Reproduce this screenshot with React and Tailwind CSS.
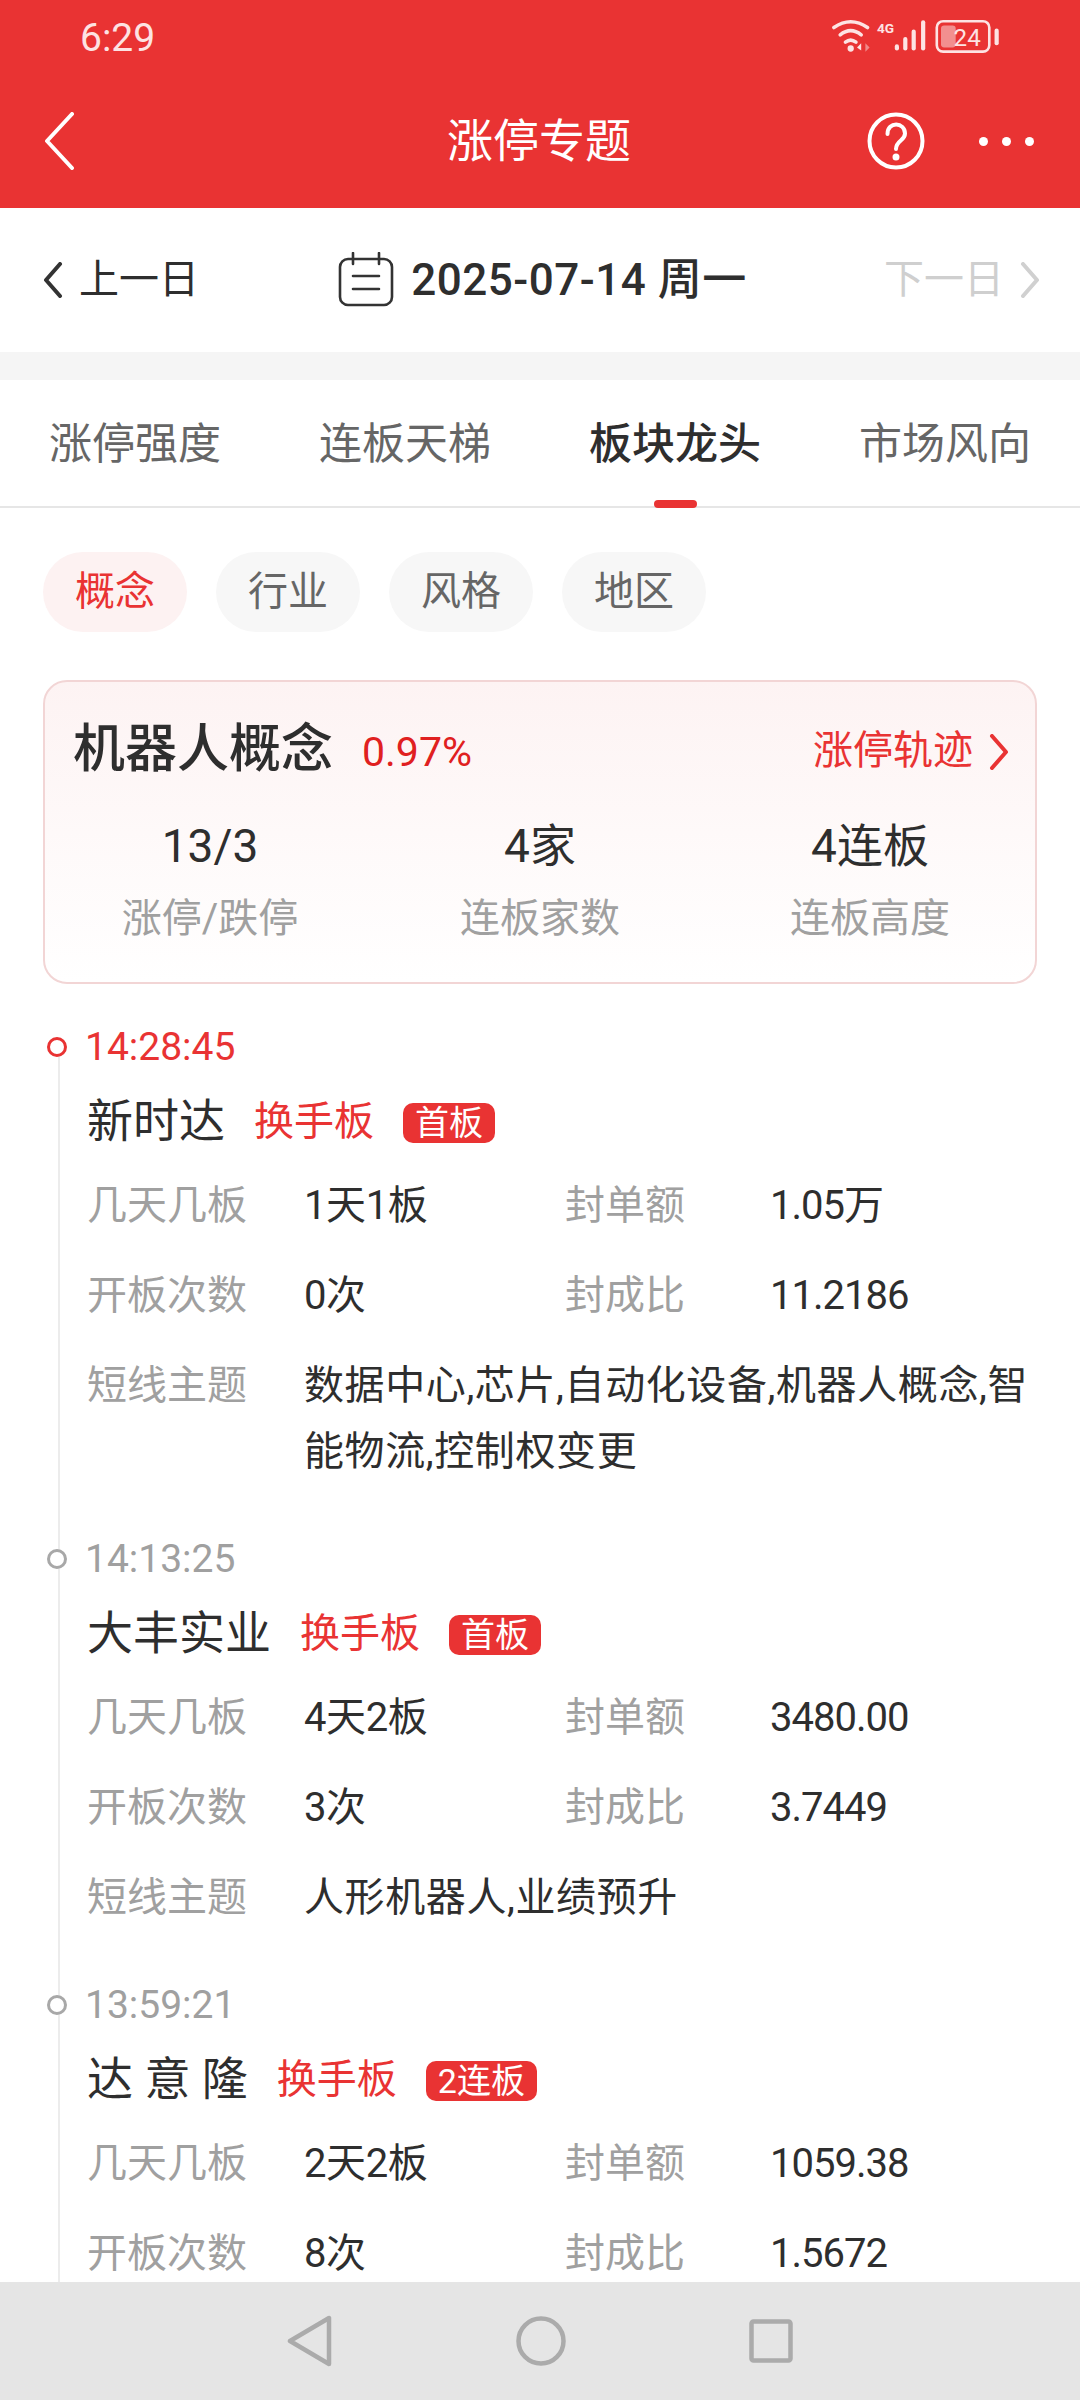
const FONT = 'font-["Roboto","Noto_Sans_CJK_SC",sans-serif]';

const stocks = [
  {
    time: '14:28:45',
    active: true,
    name: '新时达',
    tag: '首板',
    rows: [
      ['几天几板', '1天1板', '封单额', '1.05万'],
      ['开板次数', '0次', '封成比', '11.2186'],
    ],
    theme: '数据中心,芯片,自动化设备,机器人概念,智能物流,控制权变更',
  },
  {
    time: '14:13:25',
    name: '大丰实业',
    tag: '首板',
    rows: [
      ['几天几板', '4天2板', '封单额', '3480.00'],
      ['开板次数', '3次', '封成比', '3.7449'],
    ],
    theme: '人形机器人,业绩预升',
  },
  {
    time: '13:59:21',
    name: '达 意 隆',
    tag: '2连板',
    rows: [
      ['几天几板', '2天2板', '封单额', '1059.38'],
      ['开板次数', '8次', '封成比', '1.5672'],
    ],
  },
];

function StatusIcons() {
  return (
    <svg width="178" height="42" viewBox="0 0 168 40" fill="none" className="text-[#fde3e3]">
      {/* wifi */}
      <g stroke="currentColor" strokeWidth="3.4" strokeLinecap="round">
        <path d="M2 10 Q18 -1 34 10" />
        <path d="M8 17 Q18 9 28 17" />
        <path d="M13 24 Q18 20 23 24" />
      </g>
      <circle cx="18" cy="30" r="3" fill="currentColor" />
      <path d="M28 25 L28 32 L24 29 Z" fill="currentColor" />
      <path d="M32 25 L36 29 L32 33 Z" fill="#f08a8a" />
      {/* 4G */}
      <text x="43" y="15" fontSize="13" fontWeight="700" fill="currentColor" fontFamily="Roboto, sans-serif">4G</text>
      {/* signal */}
      <g fill="currentColor">
        <rect x="60" y="26" width="4" height="6" rx="2" />
        <rect x="68" y="19" width="4" height="13" rx="2" />
        <rect x="76" y="12" width="4" height="20" rx="2" />
        <rect x="85" y="3" width="4" height="29" rx="2" />
      </g>
      {/* battery */}
      <rect x="100" y="4" width="50" height="29" rx="6" stroke="currentColor" strokeWidth="2.5" />
      <rect x="104" y="8" width="14" height="21" rx="3" fill="#f28f8f" />
      <text x="116" y="28" fontSize="23" fill="currentColor" fontFamily="Roboto, sans-serif">24</text>
      <rect x="155" y="11" width="4" height="16" rx="2" fill="currentColor" />
    </svg>
  );
}

function CalendarIcon() {
  return (
    <svg width="56" height="56" viewBox="0 0 56 56" fill="none" stroke="#333" strokeWidth="2.6" strokeLinecap="round">
      <rect x="2" y="7" width="52" height="46" rx="8" />
      <path d="M15 1 V12 M41 1 V12" />
      <path d="M15 24 H41 M15 37 H41" />
    </svg>
  );
}

function Chevron({ dir, color, className }) {
  const d = dir === 'left' ? 'M17 2 L3 18 L17 34' : 'M3 2 L17 18 L3 34';
  return (
    <svg width="20" height="36" viewBox="0 0 20 36" fill="none" stroke={color} strokeWidth="4" strokeLinecap="round" strokeLinejoin="round" className={className}>
      <path d={d} />
    </svg>
  );
}

function StockItem({ item }) {
  return (
    <div className="relative pl-[87px] pr-[42px]">
      <div className="flex items-center h-[44px] -ml-[41px] pl-[2px]">
        <span
          className={`w-[20px] h-[20px] rounded-full border-[3px] bg-white shrink-0 -ml-[1px] ${item.active ? 'border-[#e93333]' : 'border-[#a8a8a8]'}`}
        />
        <span className={`ml-[18px] text-[39px] leading-none ${item.active ? 'text-[#e93333]' : 'text-[#a0a0a0]'}`}>
          {item.time}
        </span>
      </div>
      <div className="flex items-center h-[60px] mt-[22px]">
        <span className="text-[46px] leading-none text-[#2e2e2e]">{item.name}</span>
        <span className="ml-[29px] mt-[2px] text-[40px] leading-none text-[#e93333]">换手板</span>
        <span className="ml-[29px] mt-[4px] h-[40px] px-[12px] rounded-[10px] bg-[#e93333] text-white text-[34px] leading-[40px]">
          {item.tag}
        </span>
      </div>
      <div className="mt-[25px] flex flex-col gap-[30px]">
        {item.rows.map((row) => (
          <div key={row[0]} className="flex items-center h-[60px] text-[40px] leading-none">
            <span className="w-[217px] text-[#a0a0a0]">{row[0]}</span>
            <span className="w-[261px] tracking-[-0.4px] text-[#2e2e2e]">{row[1]}</span>
            <span className="w-[205px] text-[#a0a0a0]">{row[2]}</span>
            <span className="tracking-[-1px] text-[#2e2e2e]">{row[3]}</span>
          </div>
        ))}
      </div>
      {item.theme && (
        <div className="mt-[27px] flex text-[40px] leading-[66px]">
          <span className="w-[217px] shrink-0 text-[#a0a0a0]">短线主题</span>
          <span className="tracking-[0.6px] text-[#2e2e2e]">{item.theme}</span>
        </div>
      )}
    </div>
  );
}

export default function App() {
  return (
    <div className={`w-[1080px] h-[2400px] flex flex-col bg-white overflow-hidden ${FONT}`}>
      {/* red header */}
      <div className="h-[208px] shrink-0 bg-[#e93333] flex flex-col text-white">
        <div className="h-[76px] flex items-center justify-between pl-[80px] pr-[71px]">
          <span className="text-[39px] leading-none text-[#fde3e3]">6:29</span>
          <StatusIcons />
        </div>
        <div className="flex-1 grid grid-cols-[1fr_auto_1fr] items-center pl-[44px] pr-[46px] pb-[2px]">
          <svg width="30" height="58" viewBox="0 0 30 58" fill="none" stroke="white" strokeWidth="4" strokeLinecap="round" strokeLinejoin="round">
            <path d="M28 2 L3 29 L28 56" />
          </svg>
          <span className="text-[46px] leading-none">涨停专题</span>
          <div className="flex items-center justify-end gap-[54px]">
            <svg width="58" height="58" viewBox="0 0 58 58" fill="none" stroke="white" strokeWidth="4" strokeLinecap="round">
              <circle cx="29" cy="29" r="26.5" />
              <path d="M20.5 22 C20.5 9 38 10 38 21.5 C38 29 29 28 29 37" />
              <circle cx="29" cy="45" r="1.5" fill="white" />
            </svg>
            <div className="flex gap-[14px]">
              <span className="w-[9px] h-[9px] rounded-full bg-white" />
              <span className="w-[9px] h-[9px] rounded-full bg-white" />
              <span className="w-[9px] h-[9px] rounded-full bg-white" />
            </div>
          </div>
        </div>
      </div>

      {/* date row */}
      <div className="h-[144px] shrink-0 flex items-center justify-between pl-[43px] pr-[40px]">
        <div className="flex items-center text-[40px] text-[#2e2e2e]">
          <Chevron dir="left" color="#333" />
          <span className="ml-[16px]">上一日</span>
        </div>
        <div className="flex items-center gap-[17px] ml-[2px] text-[44px] tracking-[0.5px] font-medium text-[#2e2e2e]">
          <CalendarIcon />
          <span>2025-07-14 周一</span>
        </div>
        <div className="flex items-center text-[40px] text-[#cfcfcf]">
          <span>下一日</span>
          <Chevron dir="right" color="#d0d0d0" className="ml-[16px]" />
        </div>
      </div>
      <div className="h-[28px] shrink-0 bg-[#f5f5f5]" />

      {/* tabs */}
      <div className="relative h-[128px] shrink-0 border-b-2 border-[#e6e6e6] flex items-center justify-between px-[49px] pt-[2px] text-[43px] text-[#666]">
        <span>涨停强度</span>
        <span>连板天梯</span>
        <span className="font-medium text-[#2e2e2e]">板块龙头</span>
        <span>市场风向</span>
        <span className="absolute left-[654px] -bottom-[2px] w-[43px] h-[8px] rounded-full bg-[#e93333]" />
      </div>

      {/* content */}
      <div className="relative flex-1 min-h-0 overflow-hidden">
        <div className="flex gap-[29px] px-[43px] pt-[44px]">
          <span className="w-[144px] h-[80px] rounded-full bg-[#fdf2f2] text-[#e93333] text-[40px] flex items-center justify-center">概念</span>
          <span className="w-[144px] h-[80px] rounded-full bg-[#f7f7f7] text-[#666] text-[40px] flex items-center justify-center">行业</span>
          <span className="w-[144px] h-[80px] rounded-full bg-[#f7f7f7] text-[#666] text-[40px] flex items-center justify-center">风格</span>
          <span className="w-[144px] h-[80px] rounded-full bg-[#f7f7f7] text-[#666] text-[40px] flex items-center justify-center">地区</span>
        </div>

        {/* summary card */}
        <div className="mx-[43px] mt-[48px] h-[304px] rounded-[24px] border-2 border-[#f2d5d5] bg-gradient-to-b from-[#fdf3f3] to-white">
          <div className="flex items-center h-[104px] mt-[16px] pl-[28px] pr-[26px]">
            <span className="text-[52px] font-medium leading-none text-[#2e2e2e]">机器人概念</span>
            <span className="ml-[29px] mt-[4px] text-[41px] leading-none text-[#e02020]">0.97%</span>
            <span className="ml-auto mt-[2px] text-[40px] leading-none text-[#e93333]">涨停轨迹</span>
            <Chevron dir="right" color="#e93333" className="ml-[16px] mt-[4px]" />
          </div>
          <div className="grid grid-cols-3 mt-[14px]">
            {[
              ['13/3', '涨停/跌停'],
              ['4家', '连板家数'],
              ['4连板', '连板高度'],
            ].map(([value, label]) => (
              <div key={label} className="flex flex-col items-center">
                <span className="text-[46px] leading-[60px] text-[#2e2e2e]">{value}</span>
                <span className="mt-[13px] text-[40px] leading-[60px] text-[#a0a0a0]">{label}</span>
              </div>
            ))}
          </div>
        </div>

        {/* timeline */}
        <div className="relative mt-[41px] pb-[120px] flex flex-col gap-[52px]">
          <span className="absolute left-[58px] top-[30px] bottom-0 w-[2px] bg-[#ececec]" />
          {stocks.map((item) => (
            <StockItem key={item.time} item={item} />
          ))}
        </div>
      </div>

      {/* nav bar */}
      <div className="h-[118px] shrink-0 bg-[#e5e5e5] flex items-center justify-center gap-[183px]">
        <svg width="46" height="52" viewBox="0 0 46 52" fill="none" stroke="#ababab" strokeWidth="4.5" strokeLinejoin="round">
          <path d="M42 3 V49 L3 26 Z" />
        </svg>
        <svg width="50" height="50" viewBox="0 0 50 50" fill="none" stroke="#ababab" strokeWidth="4.5">
          <circle cx="25" cy="25" r="22.5" />
        </svg>
        <svg width="44" height="44" viewBox="0 0 44 44" fill="none" stroke="#ababab" strokeWidth="4.5">
          <rect x="2.5" y="2.5" width="39" height="39" rx="2" />
        </svg>
      </div>
    </div>
  );
}
